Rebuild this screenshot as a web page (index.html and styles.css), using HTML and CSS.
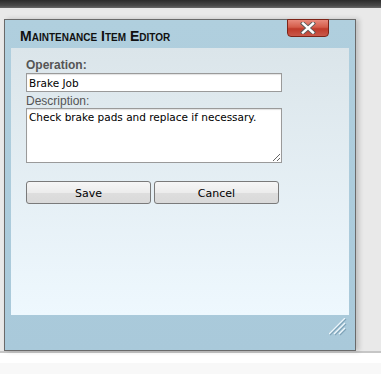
FILE: index.html
```html
<!DOCTYPE html>
<html lang="en">
<head>
  <meta charset="UTF-8">
  <title>Maintenance Item Editor</title>
  <link rel="stylesheet" href="styles.css">
</head>
<body>

  <!-- Top Bar -->
  <div class="topbar"></div>

  <!-- Dialog Area -->
  <div class="stage">
    <div class="dialog">
      <div class="titlebar">
        <span class="title">Maintenance Item Editor</span>
        <button class="close" type="button" aria-label="Close">
          <svg width="16" height="12" viewBox="0 0 16 12">
            <path d="M3 1.5 L13 10.5 M13 1.5 L3 10.5" stroke="#5a5a5a" stroke-width="4.2" stroke-linecap="square"/>
            <path d="M3 1.5 L13 10.5 M13 1.5 L3 10.5" stroke="#fff" stroke-width="2.4" stroke-linecap="square"/>
          </svg>
        </button>
      </div>

      <div class="panel">
        <form class="editor">
          <label class="field-label bold" for="operation">Operation:</label>
          <input class="text-input" id="operation" type="text" value="Brake Job">
          <label class="field-label" for="description">Description:</label>
          <textarea class="text-area" id="description">Check brake pads and replace if necessary.</textarea>
          <div class="actions">
            <button class="btn" type="button">Save</button>
            <button class="btn" type="button">Cancel</button>
          </div>
        </form>
      </div>

      <!-- Resize Grip -->
      <svg class="grip" width="18" height="18" viewBox="0 0 18 18">
        <path d="M1 17 L17 1 M6 17 L17 6 M11 17 L17 11" stroke="#7fa3b8" stroke-width="1.2"/>
        <path d="M0 16 L16 0 M5 16 L16 5 M10 16 L16 10" stroke="#eef6fb" stroke-width="1.2"/>
      </svg>
    </div>
  </div>

  <!-- Footer -->
  <div class="footer"></div>

</body>
</html>
```

FILE: styles.css
```css
* {
  margin: 0;
  padding: 0;
  box-sizing: border-box;
}

body {
  width: 381px;
  height: 374px;
  overflow: hidden;
  background-color: #f8f8f8;
  font-family: "Liberation Sans", Arial, sans-serif;
}

/* Top Bar */
.topbar {
  height: 8px;
  background: linear-gradient(#2c2c2c, #4a4a4a 70%, #6a6a6a);
}

/* Stage */
.stage {
  height: 343px;
  padding: 11px 0 0 4px;
  background-color: #e9e9e9;
}

/* Dialog */
.dialog {
  position: relative;
  width: 352px;
  height: 332px;
  border: 1px solid #6a6a6a;
  background: linear-gradient(#b0cfde, #a9c9da);
  box-shadow: 3px 0 5px rgba(0, 0, 0, 0.18);
  padding: 0 6px 35px 6px;
}

.titlebar {
  height: 28px;
  padding: 7px 0 0 9px;
}

.title {
  font-size: 14px;
  line-height: 16px;
  font-weight: bold;
  font-variant: small-caps;
  color: #111;
}

.close {
  position: absolute;
  top: -1px;
  right: 26px;
  width: 42px;
  height: 18px;
  border: 1px solid #7c2418;
  border-radius: 0 0 4px 4px;
  background: linear-gradient(#e88a7c, #d45c4a 45%, #bf3a2a 55%, #c9584a);
  display: flex;
  align-items: center;
  justify-content: center;
  cursor: pointer;
}

/* Panel */
.panel {
  height: 267px;
  padding: 10px 15px 0 15px;
  background: linear-gradient(#dbe5ea, #eef8fe);
}

.editor {
  display: flex;
  flex-direction: column;
  align-items: flex-start;
}

.field-label {
  font-size: 12px;
  line-height: 14px;
  color: #555;
}

.field-label.bold {
  font-weight: bold;
}

.text-input, .text-area {
  width: 256px;
  border: 1px solid #9a9a9a;
  background-color: #fff;
  color: #000;
  font-family: "DejaVu Sans", sans-serif;
  font-size: 10.5px;
  padding: 0 2px;
  box-shadow: inset 0 1px 1px rgba(0, 0, 0, 0.12);
  outline: none;
}

.text-input {
  height: 19px;
  margin: 1px 0 2px 0;
}

.text-area {
  height: 55px;
  padding: 2px;
  line-height: 13px;
  resize: both;
}

.actions {
  display: flex;
  gap: 3px;
  margin-top: 18px;
}

.btn {
  width: 125px;
  height: 23px;
  padding-top: 2px;
  border: 1px solid #7a7a7a;
  border-radius: 3px;
  background: linear-gradient(#f6f6f6, #ececec 50%, #dedede 50%, #d9d9d9);
  font-family: "DejaVu Sans", sans-serif;
  font-size: 11px;
  color: #000;
  cursor: pointer;
}

.grip {
  position: absolute;
  right: 8px;
  bottom: 14px;
}

/* Footer */
.footer {
  height: 23px;
  border-top: 2px solid #c6c6c6;
  background: linear-gradient(#fff 0, #fff 10px, #f8f8f8 10px);
}
```
